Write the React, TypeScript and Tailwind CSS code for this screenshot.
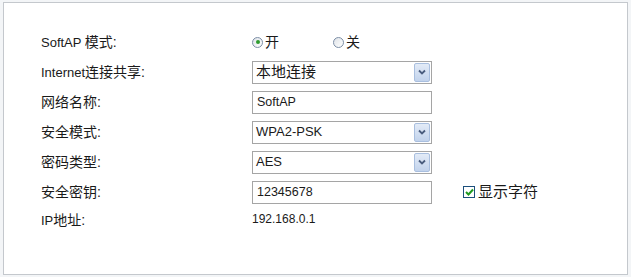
import React from "react";

function Cjk({ children, size = "text-[14px]" }: { children: React.ReactNode; size?: string }) {
  return <span className={size}>{children}</span>;
}

function Select({ value, cjk }: { value: string; cjk?: boolean }) {
  return (
    <div className="flex h-[23px] w-[180px] items-stretch border border-[#a5a5a5] bg-white">
      <div className={cjk ? "flex flex-1 items-center pl-[3px] text-[15px]" : "flex flex-1 items-center pl-[3px] text-[13px]"}>
        {value}
      </div>
      <div className="my-[1px] mr-[1px] flex w-[16px] items-center justify-center rounded-[2px] border border-[#a9bfdf] bg-gradient-to-b from-[#e3ebf7] to-[#c2d3ec]">
        <svg width="8" height="6" viewBox="0 0 8 6">
          <path d="M1 1.5 L4 4.5 L7 1.5" fill="none" stroke="#4a5d7e" strokeWidth="1.8" />
        </svg>
      </div>
    </div>
  );
}

function Input({ value }: { value: string }) {
  return (
    <div className="flex h-[23px] w-[180px] items-center border border-[#a5a5a5] bg-white pl-[4px] text-[12.5px]">
      {value}
    </div>
  );
}

function Radio({ checked }: { checked?: boolean }) {
  return (
    <span className="flex h-[11px] w-[11px] items-center justify-center rounded-full border border-[#7c8ea6] bg-gradient-to-br from-[#dfe3e8] to-white">
      {checked && <span className="h-[4px] w-[4px] rounded-full bg-[#2f9c2f]" />}
    </span>
  );
}

function Row({ label, children, last }: { label: React.ReactNode; children: React.ReactNode; last?: boolean }) {
  return (
    <div className={last ? "flex h-[30px] items-start pt-[3px]" : "flex h-[30px] items-center"}>
      <div className="w-[211px] text-[13px]">{label}</div>
      <div className="flex items-center">{children}</div>
    </div>
  );
}

export default function App() {
  return (
    <div className="h-[277px] w-[631px] overflow-hidden bg-[#f3f5f7] pl-[3px] pt-[2px] font-['Liberation_Sans','Noto_Sans_CJK_SC',sans-serif] text-[12px] text-[#1a1a1a]">
      <div className="h-[273px] w-[625px] border border-[#c4c8cd] bg-white pl-[37px] pt-[24px]">
        <Row label={<>SoftAP <Cjk>模式:</Cjk></>}>
          <div className="flex items-center">
            <Radio checked />
            <span className="ml-[2px] w-[68px]"><Cjk>开</Cjk></span>
            <Radio />
            <span className="ml-[2px]"><Cjk>关</Cjk></span>
          </div>
        </Row>
        <Row label={<>Internet<Cjk>连接共享:</Cjk></>}>
          <Select value="本地连接" cjk />
        </Row>
        <Row label={<Cjk>网络名称:</Cjk>}>
          <Input value="SoftAP" />
        </Row>
        <Row label={<Cjk>安全模式:</Cjk>}>
          <Select value="WPA2-PSK" />
        </Row>
        <Row label={<Cjk>密码类型:</Cjk>}>
          <Select value="AES" />
        </Row>
        <Row label={<Cjk>安全密钥:</Cjk>}>
          <Input value="12345678" />
          <div className="ml-[31px] flex items-center">
            <span className="flex h-[12px] w-[12px] items-center justify-center border border-[#1c4f7c] bg-white">
              <svg width="9" height="8" viewBox="0 0 9 8">
                <path d="M1 4 L3.5 6.5 L8 1.5" fill="none" stroke="#1f9a1f" strokeWidth="2" />
              </svg>
            </span>
            <span className="ml-[3px] text-[15px]">显示字符</span>
          </div>
        </Row>
        <Row label={<>IP<Cjk>地址:</Cjk></>} last>
          192.168.0.1
        </Row>
      </div>
    </div>
  );
}
